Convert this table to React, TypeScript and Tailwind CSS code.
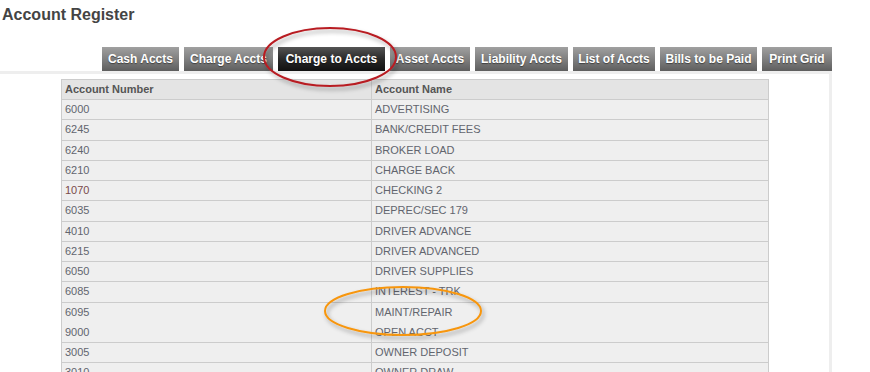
import React from "react";

const tabs = [
  { label: "Cash Accts", w: "w-[77px]" },
  { label: "Charge Accts", w: "w-[89px]" },
  { label: "Charge to Accts", w: "w-[107px]", active: true },
  { label: "Asset Accts", w: "w-[80px]" },
  { label: "Liability Accts", w: "w-[93px]" },
  { label: "List of Accts", w: "w-[82px]" },
  { label: "Bills to be Paid", w: "w-[97px]" },
  { label: "Print Grid", w: "w-[70px]" },
];

const accounts = [
  ["6000", "ADVERTISING"],
  ["6245", "BANK/CREDIT FEES"],
  ["6240", "BROKER LOAD"],
  ["6210", "CHARGE BACK"],
  ["1070", "CHECKING 2"],
  ["6035", "DEPREC/SEC 179"],
  ["4010", "DRIVER ADVANCE"],
  ["6215", "DRIVER ADVANCED"],
  ["6050", "DRIVER SUPPLIES"],
  ["6085", "INTEREST - TRK"],
  ["6095", "MAINT/REPAIR"],
  ["9000", "OPEN ACCT"],
  ["3005", "OWNER DEPOSIT"],
  ["3010", "OWNER DRAW"],
];

export default function App() {
  return (
    <div
      className="relative w-[870px] h-[372px] overflow-hidden bg-white"
      style={{ fontFamily: '"Liberation Sans", Arial, sans-serif' }}
    >
      <h1 className="pl-[2px] pt-[5px] text-[16px] font-bold leading-[20px] text-[#444]">Account Register</h1>

      {/* tab strip */}
      <div className="mt-[22px] flex gap-[5px] pl-[102px]">
        {tabs.map((t) => (
          <div
            key={t.label}
            className={`${t.w} h-[24px] flex items-center justify-center text-[12px] font-bold text-white [text-shadow:0_1px_1px_rgba(0,0,0,0.45)] ${
              t.active
                ? "bg-gradient-to-b from-[#555] via-[#2a2a2a] to-[#111]"
                : "bg-gradient-to-b from-[#a0a0a0] via-[#808080] to-[#5e5e5e]"
            }`}
          >
            {t.label}
          </div>
        ))}
      </div>

      {/* grid panel */}
      <div className="w-[832px] h-[320px] border-t-[3px] border-r-[3px] border-[#eeeeee] pt-[5px] pl-[61px]">
        <div className="w-[708px] border border-[#cccccc] text-[11px] leading-[19px]">
          <div className="flex h-[20px] border-b border-[#cccccc] bg-[#e4e4e4] font-bold text-[#555]">
            <div className="w-[310px] border-r border-[#cccccc] pl-[3px]">Account Number</div>
            <div className="flex-1 pl-[3px]">Account Name</div>
          </div>
          {accounts.map(([num, name]) => (
            <div
              key={num}
              className={`flex h-[20.25px] bg-[#efefef] text-[#62656e] ${num === "6095" ? "" : "border-b border-[#cccccc]"}`}
            >
              <div className={`w-[310px] border-r border-[#cccccc] pl-[3px] ${num === "1070" ? "text-[#7a4a4a]" : ""}`}>
                {num}
              </div>
              <div className="flex-1 pl-[3px]">{name}</div>
            </div>
          ))}
        </div>
      </div>

      {/* highlight marks */}
      <svg className="pointer-events-none absolute left-0 top-0" width="870" height="372">
        <defs>
          <filter id="shade" x="-20%" y="-20%" width="140%" height="140%">
            <feDropShadow dx="2" dy="3" stdDeviation="2" floodColor="#000" floodOpacity="0.35" />
          </filter>
        </defs>
        <ellipse cx="330" cy="57" rx="66" ry="29" fill="none" stroke="#b81c22" strokeWidth="2" filter="url(#shade)" />
        <ellipse cx="403" cy="311" rx="78" ry="24" fill="none" stroke="#f7960e" strokeWidth="2" filter="url(#shade)" />
      </svg>
    </div>
  );
}
